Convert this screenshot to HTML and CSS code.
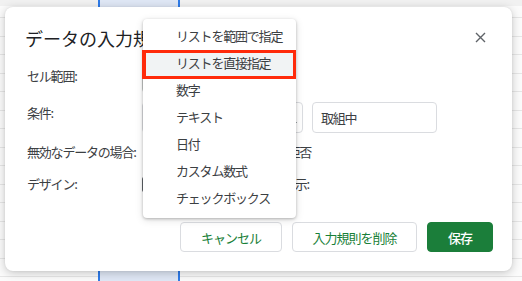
FILE: index.html
```html
<!DOCTYPE html>
<html lang="ja">
<head>
<meta charset="utf-8">
<link rel="stylesheet" href="styles.css">
</head>
<body>
<div class="sheet">
  <div class="col col-a"></div>
  <div class="col col-sel"></div>
  <div class="col col-b"></div>
</div>

<div class="dialog">
  <div class="dlg-head">
    <h1 class="dlg-title">データの入力規則</h1>
    <svg class="close" width="11" height="11" viewBox="0 0 11 11"><path d="M1 1L10 10M10 1L1 10" stroke="#5f6368" stroke-width="1.4" fill="none"/></svg>
  </div>
  <div class="form">
    <div class="row row1">
      <div class="label">セル範囲:</div>
      <div class="ctl"><div class="input range">A1:A10</div></div>
    </div>
    <div class="row row2">
      <div class="label">条件:</div>
      <div class="ctl">
        <div class="select">リストを直接指定<span class="caret"></span></div>
        <div class="input value">取組中</div>
      </div>
    </div>
    <div class="row row3">
      <div class="label">無効なデータの場合:</div>
      <div class="ctl radios">
        <span class="radio-txt">警告を表示</span>
        <span class="radio-txt">入力を拒否</span>
      </div>
    </div>
    <div class="row row4">
      <div class="label">デザイン:</div>
      <div class="ctl">
        <span class="checkbox"></span>
        <span class="cb-txt">ヘルプテキストを表示:</span>
      </div>
    </div>
  </div>
  <div class="actions">
    <button class="btn">キャンセル</button>
    <button class="btn btn-del">入力規則を削除</button>
    <button class="btn btn-save">保存</button>
  </div>

  <ul class="menu">
    <li class="item">リストを範囲で指定</li>
    <li class="item active">リストを直接指定</li>
    <li class="item">数字</li>
    <li class="item">テキスト</li>
    <li class="item">日付</li>
    <li class="item">カスタム数式</li>
    <li class="item">チェックボックス</li>
  </ul>
</div>
</body>
</html>
```

FILE: styles.css
```css
* { box-sizing: border-box; }
html, body {
  margin: 0;
  padding: 0;
  width: 522px;
  height: 281px;
  overflow: hidden;
  font-family: "Noto Sans CJK JP", "Noto Sans", sans-serif;
}
body {
  position: relative;
  background: #fbfbfb;
}

.sheet {
  display: flex;
  height: 281px;
}
.col {
  height: 100%;
  background:
    linear-gradient(#f1f1f1, #f1f1f1) top / 100% 6px no-repeat,
    repeating-linear-gradient(to bottom, transparent 0, transparent 17.5px, #e6e6e6 17.5px, #e6e6e6 18.5px);
}
.col-a { width: 98px; }
.col-sel {
  width: 82px;
  border-left: 2px solid #2f7be8;
  border-right: 2px solid #2f7be8;
  background: #dfe7f5;
}
.col-b { flex: 1; }

.dialog {
  position: absolute;
  left: 5px;
  top: 7px;
  width: 507px;
  height: 264px;
  background: #fff;
  border-radius: 8px;
  box-shadow: 0 2px 10px rgba(0, 0, 0, 0.22), 0 0 2px rgba(0, 0, 0, 0.08);
  padding: 19px 19px 0 20px;
}

.dlg-head {
  display: flex;
  align-items: center;
  justify-content: space-between;
  height: 24px;
}
.dlg-title {
  margin: 0;
  font-size: 18px;
  font-weight: 400;
  color: #202124;
  line-height: 24px;
  letter-spacing: 0;
}
.close { margin-right: 7px; margin-top: -2px; }

.form {
  display: flex;
  flex-direction: column;
  margin-top: 15px;
  padding-left: 2px;
}
.row {
  display: flex;
  align-items: flex-start;
}
.label {
  width: 115px;
  font-size: 13px;
  letter-spacing: -1.2px;
  color: #3c4043;
  line-height: 20px;
  margin-top: 1px;
}
.ctl {
  display: flex;
  align-items: center;
  gap: 9px;
}
.row1 { height: 28px; }
.row2 { height: 31px; margin-top: 9px; }
.row3 { height: 20px; margin-top: 9px; }
.row4 { height: 20px; margin-top: 12px; }
.row3 .label, .row4 .label { margin-top: 0; }

.input, .select {
  border: 1px solid #dadce0;
  border-radius: 4px;
  font-size: 13px;
  letter-spacing: -1.2px;
  color: #3c4043;
  display: flex;
  align-items: center;
  padding-left: 8px;
}
.range {
  width: 140px;
  height: 28px;
  border-color: #c4c7c5;
}
.select {
  position: relative;
  width: 161px;
  height: 31px;
}
.caret {
  position: absolute;
  right: 5px;
  top: 19px;
  width: 4px;
  height: 1px;
  background: #9aa0a6;
}
.value {
  width: 125px;
  height: 31px;
}

.radios { gap: 30px; padding-left: 21px; }
.radio-txt, .cb-txt {
  font-size: 13px;
  letter-spacing: -1.2px;
  color: #3c4043;
  line-height: 20px;
}
.checkbox {
  width: 15px;
  height: 15px;
  border: 2px solid #5f6368;
  border-radius: 2px;
}
.row4 .ctl { gap: 32px; }

.actions {
  display: flex;
  justify-content: flex-end;
  gap: 10px;
  margin-top: 28px;
}
.btn {
  height: 30px;
  border: 1px solid #dadce0;
  border-radius: 4px;
  background: #fff;
  color: #188038;
  font-family: "Noto Sans CJK JP", "Noto Sans", sans-serif;
  font-size: 13px;
  letter-spacing: -1px;
  padding: 0;
}
.btn:first-child { width: 102px; }
.btn-del { width: 125px; }
.btn-save {
  width: 66px;
  background: #1b7e3a;
  border-color: #1b7e3a;
  color: #fff;
  font-weight: 500;
}

.menu {
  position: absolute;
  left: 138px;
  top: 12px;
  width: 153px;
  margin: 0;
  padding: 4px 0 6px;
  list-style: none;
  background: #fff;
  border-radius: 4px;
  box-shadow: 0 1px 3px rgba(0, 0, 0, 0.25), 0 2px 8px rgba(0, 0, 0, 0.12);
}
.item {
  height: 27px;
  line-height: 26px;
  padding-left: 33px;
  font-size: 13px;
  letter-spacing: -1.2px;
  color: #3c4043;
  white-space: nowrap;
}
.item.active {
  background: #f1f3f4;
  outline: 3px solid #ff2a0a;
  outline-offset: -3px;
  box-shadow: -1px 0 0 #ff2a0a;
  height: 29px;
  margin-bottom: -2px;
}
```
